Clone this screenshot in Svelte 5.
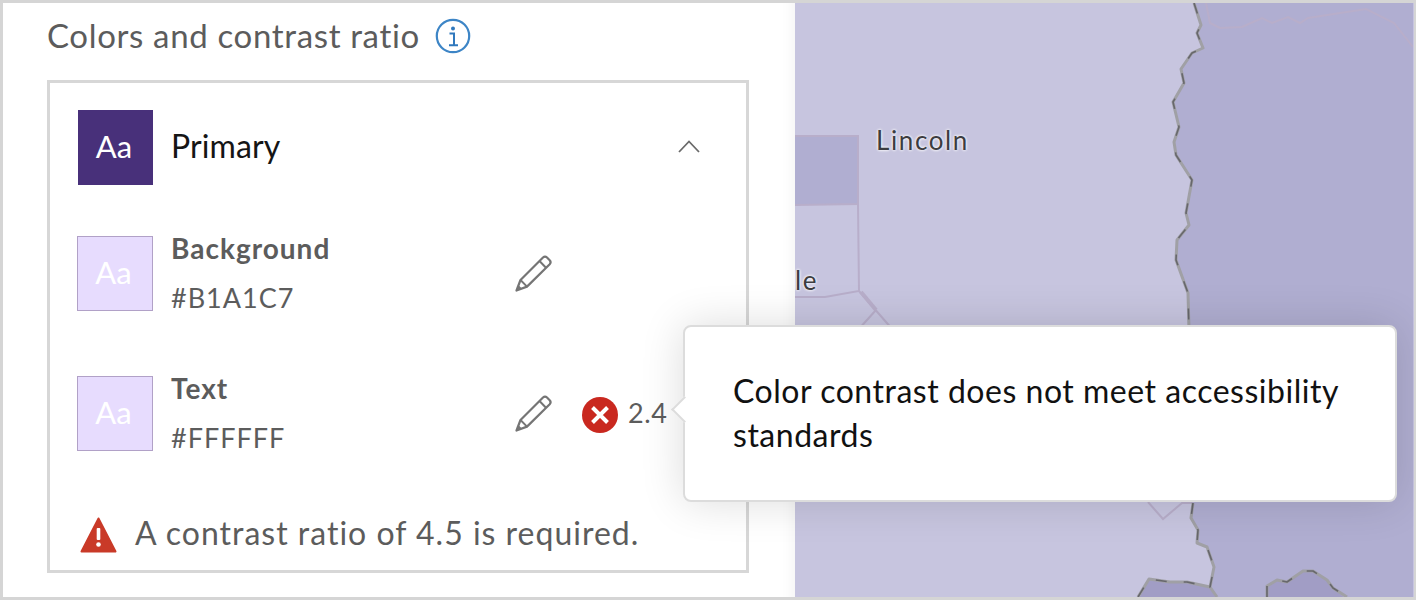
<script>
  const rows = [
    { label: 'Background', hex: '#B1A1C7', status: false },
    { label: 'Text', hex: '#FFFFFF', status: true }
  ];
</script>

<div class="frame">
  <section class="panel">
    <header class="heading">
      <h2>Colors and contrast ratio</h2>
      <svg class="info" viewBox="0 0 36 36" width="36" height="36" aria-hidden="true">
        <circle cx="18" cy="18" r="16.2" fill="none" stroke="#3d85c6" stroke-width="2.2" />
        <circle cx="18" cy="10.5" r="2" fill="#2f78bd" />
        <path d="M14.5 15.5h4.5v11.5M14 27.2h9" fill="none" stroke="#2f78bd" stroke-width="2" />
      </svg>
    </header>

    <div class="card">
      <div class="primary">
        <div class="swatch dark">Aa</div>
        <span class="primary-label">Primary</span>
        <svg class="chevron" viewBox="0 0 24 14" width="24" height="14" aria-hidden="true">
          <path d="M2 13 12 2.5 22 13" fill="none" stroke="#6a6a6a" stroke-width="1.8" />
        </svg>
      </div>

      {#each rows as row}
        <div class="color-row">
          <div class="swatch light">Aa</div>
          <div class="meta">
            <strong>{row.label}</strong>
            <span>{row.hex}</span>
          </div>
          <svg class="pencil" viewBox="0 0 40 40" width="40" height="40" aria-hidden="true">
            <path d="M3.5 36.5 7.5 26 30 3.5q2-1.8 4 0l2.7 2.7q1.8 2 0 4L14 32.6Z" fill="none" stroke="#757575" stroke-width="2.2" stroke-linejoin="round" />
            <path d="M26.5 7 33 13.7M7.5 26 14 32.6" fill="none" stroke="#757575" stroke-width="2" />
            <path d="M3.5 36.5 5.5 31 9 34.7Z" fill="#757575" />
          </svg>
          {#if row.status}
            <svg class="err" viewBox="0 0 36 36" width="36" height="36" aria-hidden="true">
              <circle cx="18" cy="18" r="18" fill="#c9281f" />
              <path d="M10.5 10.5l15 15M25.5 10.5l-15 15" stroke="#fff" stroke-width="4" />
            </svg>
            <span class="ratio">2.4</span>
          {/if}
        </div>
      {/each}

      <div class="warning">
        <svg viewBox="0 0 36 36" width="37" height="36" aria-hidden="true">
          <path d="M18 1.5 35 34.5H1Z" fill="#c93a28" stroke="#c93a28" stroke-width="2" stroke-linejoin="round" />
          <rect x="16.2" y="11" width="3.6" height="12" rx="1" fill="#fff" />
          <circle cx="18" cy="27.5" r="2.3" fill="#fff" />
        </svg>
        <span>A contrast ratio of 4.5 is required.</span>
      </div>
    </div>
  </section>

  <div class="map">
    <svg class="map-art" viewBox="795 0 618 600" width="618" height="600" preserveAspectRatio="none" aria-hidden="true">
      <path d="M1194 0 1201 25 1197 33 1203 48 1192 53 1181 69 1184 83 1173 102 1179 127 1174 142 1176 155 1192 180 1186 213 1189 225 1177 240 1176 260 1188 293 1189 330 1193 503 1191 518 1198 530 1197 543 1207 547 1214 567 1210 587 1217 600H1416V0Z" fill="#b0aed1" />
      <path d="M1138 600 1149 579 1170 582 1187 582 1210 587 1217 600Z" fill="#a19dc5" />
      <path d="M1267 600V586L1277 580 1287 582 1303 571 1313 571 1327 580 1333 588 1347 600Z" fill="#a19dc5" />
      <path d="M795 136H858V204L795 205Z" fill="#b0aed1" />

      <g fill="none" stroke="#b8aeca" stroke-width="2">
        <path d="M795 136H858V204L795 205" />
        <path d="M858 204 859 291 825 297H795" />
        <path d="M859 291 893 330M876 310 858 330" />
        <path d="M1206 3 1210 23 1220 28 1242 27 1262 18 1272 23 1288 17 1300 23 1308 18 1366 9 1394 23 1413 47" />
        <path d="M1148 502 1163 519 1182 503 1193 503" />
      </g>
      <path d="M861 292 876 310" fill="none" stroke="#b8aeca" stroke-width="4" />

      <g class="coast" fill="none" stroke-linejoin="round">
        <path d="M1194 3 1201 25 1197 33 1203 48 1192 53 1181 69 1184 83 1173 102 1179 127 1174 142 1176 155 1192 180 1186 213 1189 225 1177 240 1176 260 1188 293 1189 330" />
        <path d="M1193 503 1191 518 1198 530 1197 543 1207 547 1214 567 1210 587 1217 597" />
        <path d="M1138 597 1149 579 1170 582 1187 582 1210 587" />
        <path d="M1267 597V586L1277 580 1287 582 1303 571 1313 571 1327 580 1333 588 1347 597" />
      </g>
      <g class="coast-dash" fill="none" stroke-linejoin="round">
        <path d="M1194 3 1201 25 1197 33 1203 48 1192 53 1181 69 1184 83 1173 102 1179 127 1174 142 1176 155 1192 180 1186 213 1189 225 1177 240 1176 260 1188 293 1189 330" />
        <path d="M1193 503 1191 518 1198 530 1197 543 1207 547 1214 567 1210 587 1217 597" />
        <path d="M1138 597 1149 579 1170 582 1187 582 1210 587" />
        <path d="M1267 597V586L1277 580 1287 582 1303 571 1313 571 1327 580 1333 588 1347 597" />
      </g>
    </svg>
    <span class="place lincoln">Lincoln</span>
    <span class="place suffix">le</span>
  </div>

  <aside class="tooltip">
    <span class="arrow"></span>
    <p>Color contrast does not meet accessibility standards</p>
  </aside>
</div>

<style>
  :global(body) {
    margin: 0;
    background: #fff;
  }

  .frame {
    position: relative;
    box-sizing: border-box;
    width: 1416px;
    height: 600px;
    display: flex;
    overflow: hidden;
    border: 3px solid #d5d5d5;
    border-right-width: 2px;
    font-family: Lato, "Open Sans", sans-serif;
  }

  .panel {
    box-sizing: border-box;
    flex: 0 0 792px;
    padding-left: 44px;
    background: #fff;
    box-shadow: inset -16px 0 14px -14px rgba(0, 0, 0, 0.05);
  }

  .heading {
    display: flex;
    align-items: center;
    gap: 15px;
    height: 67px;
  }

  h2 {
    margin: -4px 0 0;
    font-size: 33px;
    font-weight: 400;
    letter-spacing: 0.65px;
    color: #5c5c5c;
  }

  .info {
    margin-top: -1px;
  }

  .card {
    box-sizing: border-box;
    width: 702px;
    height: 493px;
    margin-top: 10px;
    padding: 27px 0 0 28px;
    border: 3px solid #d7d7d7;
  }

  .primary {
    display: flex;
    align-items: center;
    height: 75px;
    margin-bottom: 51px;
  }

  .swatch {
    box-sizing: border-box;
    flex: 0 0 75px;
    width: 75px;
    height: 75px;
    padding: 0 3px 4px 0;
    display: flex;
    align-items: center;
    justify-content: center;
    font-size: 31px;
    font-weight: 400;
    color: #fff;
  }

  .swatch.dark {
    background: #48307a;
  }

  .swatch.light {
    flex-basis: 76px;
    width: 76px;
    margin-left: -1px;
    border: 1px solid #b1a1c7;
    background: #e7dcfe;
  }

  .primary-label {
    margin: -4px 0 0 18px;
    font-size: 32px;
    letter-spacing: 0.1px;
    color: #151515;
  }

  .chevron {
    margin-left: auto;
    margin-right: 45px;
    margin-top: -3px;
  }

  .color-row {
    display: flex;
    align-items: center;
    height: 75px;
    margin-bottom: 65px;
  }

  .meta {
    flex: 0 0 344px;
    display: flex;
    flex-direction: column;
    gap: 18px;
    margin-left: 18px;
    margin-top: -2px;
    color: #5c5c5c;
  }

  .meta strong {
    font-size: 28px;
    line-height: 32px;
    font-weight: 700;
    letter-spacing: 1px;
  }

  .meta span {
    font-size: 27px;
    line-height: 32px;
    letter-spacing: 1px;
  }

  .pencil {
    flex: none;
    margin-left: -2px;
  }

  .err {
    flex: none;
    margin-left: 29px;
    margin-top: 2px;
  }

  .ratio {
    margin: -2px 0 0 10px;
    font-size: 27px;
    letter-spacing: 0.6px;
    color: #5c5c5c;
  }

  .warning {
    display: flex;
    align-items: center;
    gap: 18px;
    margin-top: -5px;
    margin-left: 2px;
    font-size: 32px;
    letter-spacing: 1px;
    color: #5c5c5c;
  }

  .warning svg {
    margin-top: 6px;
  }

  .map {
    position: relative;
    flex: 1;
    background: #c7c5df;
  }

  .map-art {
    position: absolute;
    inset: -3px 0 0 0;
    display: block;
  }

  .coast {
    stroke: #a0a0a5;
    stroke-width: 3;
  }

  .coast-dash {
    stroke: #67676c;
    stroke-width: 1.6;
    stroke-dasharray: 11 17;
  }

  .place {
    position: absolute;
    font-size: 26px;
    line-height: 30px;
    letter-spacing: 1.6px;
    color: #3c3c40;
    text-shadow: 0 0 3px #fff, 0 0 3px #fff;
  }

  .lincoln {
    left: 81px;
    top: 122px;
  }

  .suffix {
    left: 0;
    top: 262px;
  }

  .tooltip {
    position: absolute;
    left: 680px;
    top: 322px;
    box-sizing: border-box;
    width: 714px;
    height: 177px;
    padding: 42px 40px 0 48px;
    background: #fff;
    border: 2px solid #dcdcdc;
    border-radius: 8px;
    box-shadow: 0 0 44px rgba(0, 0, 0, 0.14);
  }

  .arrow {
    position: absolute;
    left: -10px;
    top: 73px;
    width: 17px;
    height: 17px;
    background: #fff;
    border-left: 2px solid #dcdcdc;
    border-bottom: 2px solid #dcdcdc;
    transform: rotate(45deg);
  }

  .tooltip p {
    position: relative;
    margin: 0;
    font-size: 32px;
    line-height: 44px;
    letter-spacing: 0.52px;
    color: #111;
  }
</style>
